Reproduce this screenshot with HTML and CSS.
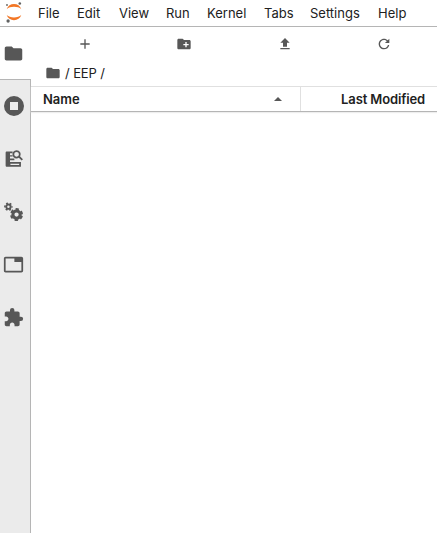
FILE: index.html
```html
<!DOCTYPE html>
<html lang="en">
<head>
<meta charset="utf-8">
<title>JupyterLab</title>
<link rel="stylesheet" href="styles.css">
</head>
<body>
<header class="menubar">
  <svg class="logo" viewBox="0 0 18 24">
    <path fill="#f37726" d="M1.7 9.2C2.8 6 5.6 4.1 9 4.1s6.200 1.900 7.300 5.100C14.600 7.600 12 6.800 9 6.800S3.400 7.600 1.700 9.200z"/>
    <path fill="#f37726" d="M1.700 15C2.800 18.200 5.600 20.200 9 20.200s6.200-2 7.300-5.200C14.600 16.600 12 17.500 9 17.500S3.400 16.600 1.700 15z"/>
    <circle cx="14.800" cy="3.500" r="1.300" fill="#616262"/>
    <circle cx="2" cy="5" r=".9" fill="#616262"/>
    <circle cx="3.100" cy="21" r="1.650" fill="#616262"/>
  </svg>
  <nav class="menus">
    <span class="menu file">File</span>
    <span class="menu edit">Edit</span>
    <span class="menu view">View</span>
    <span class="menu run">Run</span>
    <span class="menu kernel">Kernel</span>
    <span class="menu tabs">Tabs</span>
    <span class="menu settings">Settings</span>
    <span class="menu help">Help</span>
  </nav>
</header>
<div class="main">
  <aside class="sidebar">
    <div class="tab active"><svg viewBox="0 0 24 24"><path d="M10 4H4c-1.100 0-2 .9-2 2v12c0 1.100.9 2 2 2h16c1.100 0 2-.9 2-2V8c0-1.100-.9-2-2-2h-8z"/></svg></div>
    <div class="tab"><svg class="running" viewBox="0 0 20 20"><path fill-rule="evenodd" d="M10 0a10 10 0 1 0 0 20a10 10 0 0 0 0-20zM6 6h8v8H6z"/></svg></div>
    <div class="tab"><svg viewBox="0 0 24 24"><path fill-rule="evenodd" d="M4.500 4H11v2H8v2.200h3v1.600H8V12h5v2H8v2h12.500v5.500h-16c-1 0-1.500-.5-1.500-1.500v-14.500C3 4.500 3.500 4 4.500 4zM8.500 18v1.500h10V18z"/><path fill-rule="evenodd" d="M15.500 2.500a4.700 4.700 0 1 0 2.600 8.600l3.200 3.200 1.500-1.500-3.200-3.200a4.700 4.700 0 0 0-4.100-7.100zm0 2a2.700 2.700 0 1 1 0 5.400a2.700 2.700 0 0 1 0-5.400z"/></svg></div>
    <div class="tab"><svg viewBox="0 0 24 24"><g fill="none" stroke="#575757"><circle cx="6.200" cy="6.500" r="2.500" stroke-width="2.200"/><circle cx="6.200" cy="6.500" r="4" stroke-width="1.800" stroke-dasharray="2.090 2.090" stroke-dashoffset="1.050"/><circle cx="15.500" cy="15.500" r="4.200" stroke-width="3.500"/><circle cx="15.500" cy="15.500" r="6.300" stroke-width="2.200" stroke-dasharray="3.800 2.800" stroke-dashoffset="-1.400"/></g></svg></div>
    <div class="tab"><svg viewBox="0 0 24 24"><path d="M21 3H3c-1.100 0-2 .9-2 2v14c0 1.100.9 2 2 2h18c1.100 0 2-.9 2-2V5c0-1.100-.9-2-2-2zm0 16H3V5h10v4h8v10z"/></svg></div>
    <div class="tab"><svg viewBox="0 0 24 24"><path d="M20.500 11H19V7c0-1.100-.9-2-2-2h-4V3.500a2.500 2.500 0 0 0-5 0V5H4c-1.100 0-1.990.9-1.990 2v3.800H3.500c1.490 0 2.700 1.210 2.700 2.700s-1.210 2.700-2.700 2.700H2V20c0 1.100.9 2 2 2h3.800v-1.500c0-1.490 1.210-2.700 2.700-2.700s2.700 1.210 2.700 2.700V22H17c1.100 0 2-.9 2-2v-4h1.500a2.500 2.500 0 0 0 0-5z"/></svg></div>
  </aside>
  <section class="browser">
    <div class="toolbar">
      <div class="tool"><svg viewBox="0 0 24 24"><path d="M19 13h-6v6h-2v-6H5v-2h6V5h2v6h6z"/></svg></div>
      <div class="tool"><svg viewBox="0 0 24 24"><path d="M20 6h-8l-2-2H4c-1.110 0-1.990.89-1.990 2L2 18c0 1.110.89 2 2 2h16c1.110 0 2-.89 2-2V8c0-1.110-.89-2-2-2zm-1 8h-3v3h-2v-3h-3v-2h3V9h2v3h3z"/></svg></div>
      <div class="tool"><svg viewBox="0 0 24 24"><path d="M9 16h6v-6h4l-7-7-7 7h4zM5 18h14v2H5z"/></svg></div>
      <div class="tool"><svg viewBox="0 0 18 18"><path d="M9 13.500c-2.490 0-4.500-2.010-4.500-4.500S6.510 4.500 9 4.500c1.240 0 2.360.52 3.170 1.330L10 8h5V3l-1.760 1.760C12.150 3.680 10.660 3 9 3 5.690 3 3.010 5.690 3.010 9S5.690 15 9 15c2.970 0 5.430-2.160 5.900-5h-1.520c-.46 2-2.240 3.500-4.380 3.500z"/></svg></div>
    </div>
    <div class="crumbs"><svg viewBox="0 0 24 24"><path d="M10 4H4c-1.100 0-2 .9-2 2v12c0 1.100.9 2 2 2h16c1.100 0 2-.9 2-2V8c0-1.100-.9-2-2-2h-8z"/></svg><span>/ EEP /</span></div>
    <div class="columns">
      <div class="column name"><span>Name</span><svg viewBox="0 0 8 4"><path d="M0 4L4 0l4 4z"/></svg></div>
      <div class="column modified">Last Modified</div>
    </div>
  </section>
</div>
</body>
</html>
```

FILE: styles.css
```css
* { box-sizing: border-box; }
body {
  margin: 0;
  height: 533px;
  overflow: hidden;
  display: flex;
  flex-direction: column;
  background: #fff;
  color: #212121;
  font: 13px/18px Inter, "Liberation Sans", sans-serif;
}
svg { display: block; flex: none; fill: #575757; }
.menubar {
  display: flex;
  height: 27px;
  flex: none;
  border-bottom: 1px solid #b5b5b5;
}
.logo { width: 18px; height: 24px; margin-left: 5px; }
.menus { display: flex; padding: 4px 0 0 15px; }
.menu { white-space: nowrap; }
.file { width: 39px; }
.edit { width: 42px; }
.view { width: 47px; }
.run { width: 41px; }
.kernel { width: 57px; }
.tabs { width: 46px; }
.settings { width: 68px; }
.main { display: flex; flex: 1; }
.sidebar {
  width: 31px;
  flex: none;
  display: flex;
  flex-direction: column;
  background: #ebebeb;
}
.sidebar::after { content: ""; flex: 1; border-right: 1px solid #b5b5b5; }
.tab {
  height: 53px;
  display: flex;
  align-items: center;
  padding: 0 0 2px 3px;
  border-right: 1px solid #b5b5b5;
}
.tab svg { width: 21px; height: 21px; }
.tab .running { width: 20px; height: 20px; margin-left: 1px; }
.active { padding-bottom: 0; background: #fff; border-right: 0; border-bottom: 1px solid #b5b5b5; }
.browser { flex: 1; min-width: 0; }
.toolbar { display: flex; height: 34px; padding: 0 3px 0 4px; }
.tool { flex: 1; display: flex; align-items: center; justify-content: center; }
.tool svg { width: 16px; height: 16px; }
.tool:nth-child(2) { padding-right: 1px; }
.crumbs { display: flex; align-items: center; height: 25px; padding: 0 0 2px 14px; }
.crumbs svg { width: 16px; height: 16px; margin-right: 4px; }
.crumbs span { letter-spacing: -.1px; }
.columns {
  display: flex;
  height: 26px;
  border-top: 1px solid #e0e0e0;
  border-bottom: 1px solid #b5b5b5;
  box-shadow: 0 1px 1px #eee;
  font-weight: 600;
}
.column { display: flex; align-items: center; }
.name { width: 270px; padding: 0 18px 0 12px; justify-content: space-between; border-right: 1px solid #e0e0e0; }
.name svg { width: 8px; height: 4px; }
.modified { flex: 1; justify-content: flex-end; padding-right: 12px; letter-spacing: -.13px; }
```
